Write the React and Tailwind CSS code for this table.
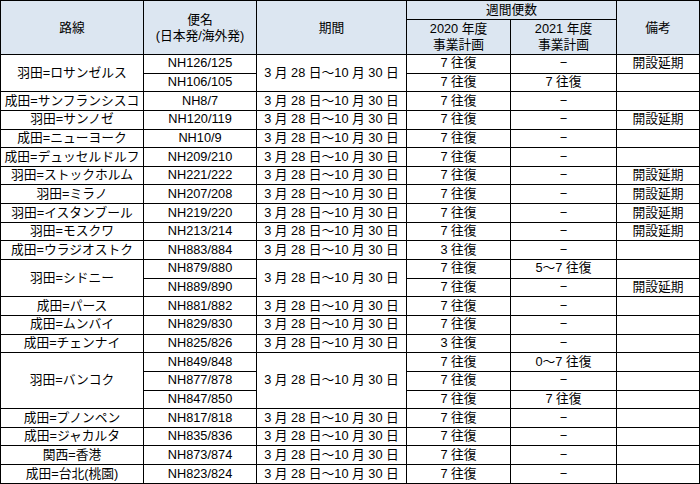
const D = "−";

const rows = [
  { route: "羽田=ロサンゼルス", flights: [["NH126/125", "7 往復", D, "開設延期"], ["NH106/105", "7 往復", "7 往復", ""]] },
  { route: "成田=サンフランシスコ", flights: [["NH8/7", "7 往復", D, ""]] },
  { route: "羽田=サンノゼ", flights: [["NH120/119", "7 往復", D, "開設延期"]] },
  { route: "成田=ニューヨーク", flights: [["NH10/9", "7 往復", D, ""]] },
  { route: "成田=デュッセルドルフ", flights: [["NH209/210", "7 往復", D, ""]] },
  { route: "羽田=ストックホルム", flights: [["NH221/222", "7 往復", D, "開設延期"]] },
  { route: "羽田=ミラノ", flights: [["NH207/208", "7 往復", D, "開設延期"]] },
  { route: "羽田=イスタンブール", flights: [["NH219/220", "7 往復", D, "開設延期"]] },
  { route: "羽田=モスクワ", flights: [["NH213/214", "7 往復", D, "開設延期"]] },
  { route: "成田=ウラジオストク", flights: [["NH883/884", "3 往復", D, ""]] },
  { route: "羽田=シドニー", flights: [["NH879/880", "7 往復", "5～7 往復", ""], ["NH889/890", "7 往復", D, "開設延期"]] },
  { route: "成田=パース", flights: [["NH881/882", "7 往復", D, ""]] },
  { route: "成田=ムンバイ", flights: [["NH829/830", "7 往復", D, ""]] },
  { route: "成田=チェンナイ", flights: [["NH825/826", "3 往復", D, ""]] },
  {
    route: "羽田=バンコク",
    flights: [
      ["NH849/848", "7 往復", "0～7 往復", ""],
      ["NH877/878", "7 往復", D, ""],
      ["NH847/850", "7 往復", "7 往復", ""],
    ],
  },
  { route: "成田=プノンペン", flights: [["NH817/818", "7 往復", D, ""]] },
  { route: "成田=ジャカルタ", flights: [["NH835/836", "7 往復", D, ""]] },
  { route: "関西=香港", flights: [["NH873/874", "7 往復", D, ""]] },
  { route: "成田=台北(桃園)", flights: [["NH823/824", "7 往復", D, ""]] },
];

const PERIOD = "3 月 28 日～10 月 30 日";
const cell = "border border-black p-0 text-center align-middle leading-none whitespace-nowrap";
const head = "border border-black p-0 text-center align-middle bg-[#dce6f1] leading-[16px] font-normal";

export default function App() {
  return (
    <div className="w-[700px] h-[484px] bg-white overflow-hidden font-['Liberation_Sans','Noto_Sans_CJK_JP',sans-serif] text-[12.75px] text-black">
      <table className="table-fixed border-collapse w-[699px]">
        <colgroup>
          <col className="w-[143px]" />
          <col className="w-[113px]" />
          <col className="w-[150px]" />
          <col className="w-[104px]" />
          <col className="w-[106px]" />
          <col className="w-[83px]" />
        </colgroup>
        <thead>
          <tr className="h-[19px]">
            <th rowSpan={2} className={head}>路線</th>
            <th rowSpan={2} className={head}>
              便名
              <br />
              (日本発/海外発)
            </th>
            <th rowSpan={2} className={head}>期間</th>
            <th colSpan={2} className={head}>週間便数</th>
            <th rowSpan={2} className={head}>備考</th>
          </tr>
          <tr className="h-[35px]">
            <th className={head}>
              2020 年度
              <br />
              事業計画
            </th>
            <th className={head}>
              2021 年度
              <br />
              事業計画
            </th>
          </tr>
        </thead>
        <tbody>
          {rows.map((r) =>
            r.flights.map((f, i) => (
              <tr key={r.route + f[0]} className="h-[18.65px]">
                {i === 0 && (
                  <td rowSpan={r.flights.length} className={cell}>
                    {r.route}
                  </td>
                )}
                <td className={cell}>{f[0]}</td>
                {i === 0 && (
                  <td rowSpan={r.flights.length} className={cell}>
                    {PERIOD}
                  </td>
                )}
                <td className={cell}>{f[1]}</td>
                <td className={cell}>{f[2]}</td>
                <td className={cell}>{f[3]}</td>
              </tr>
            ))
          )}
        </tbody>
      </table>
    </div>
  );
}
